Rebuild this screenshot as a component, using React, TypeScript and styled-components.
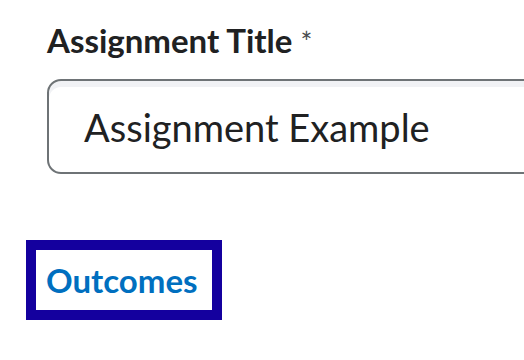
import React from 'react';
import styled, { createGlobalStyle } from 'styled-components';

const GlobalStyle = createGlobalStyle`
  html, body {
    margin: 0;
    padding: 0;
    background: #ffffff;
    font-family: Lato, "Noto Sans", sans-serif;
  }
`;

const Page = styled.div`
  width: 524px;
  height: 360px;
  overflow: hidden;
  padding: 18px 0 0 47px;
  box-sizing: border-box;
`;

const Label = styled.label`
  display: block;
  font-size: 33px;
  font-weight: 700;
  color: #202122;
  line-height: 44px;
`;

const Required = styled.span`
  font-weight: 400;
  font-size: 28px;
  color: #494c4e;
  margin-left: 8px;
`;

const TextInput = styled.div`
  margin-top: 15px;
  width: 520px;
  height: 95px;
  box-sizing: border-box;
  border: 2px solid #6e7376;
  border-radius: 14px;
  box-shadow: inset 0 6px 0 0 #f1f2f5;
  padding: 0 0 0 35px;
  display: flex;
  align-items: center;
  font-size: 38px;
  color: #202122;
`;

const OutcomesLink = styled.a`
  display: inline-flex;
  align-items: center;
  margin: 66px 0 0 -21px;
  width: 196px;
  height: 80px;
  box-sizing: border-box;
  border: 10px solid #14009e;
  padding-left: 10px;
  font-size: 33px;
  font-weight: 700;
  color: #006fbf;
  text-decoration: none;
`;

export default function App() {
  return (
    <>
      <GlobalStyle />
      <Page>
        <Label>
          Assignment Title<Required>*</Required>
        </Label>
        <TextInput>Assignment Example</TextInput>
        <OutcomesLink href="#">Outcomes</OutcomesLink>
      </Page>
    </>
  );
}
